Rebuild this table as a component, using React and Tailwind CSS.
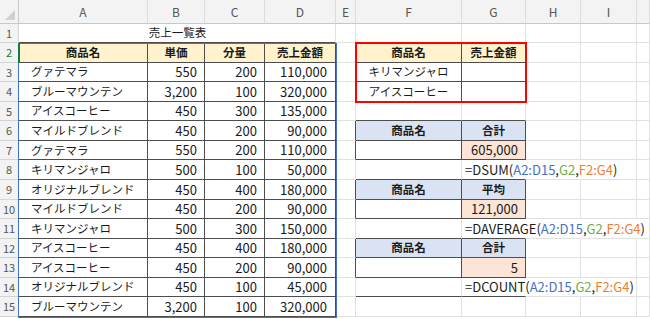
import clsx from 'clsx'

// Excel 風のシート：売上一覧表と DSUM / DAVERAGE / DCOUNT の例
const FONT = { fontFamily: '"Noto Sans CJK JP", "Noto Sans", sans-serif' }

const DATA = [
  ['グァテマラ', '550', '200', '110,000'],
  ['ブルーマウンテン', '3,200', '100', '320,000'],
  ['アイスコーヒー', '450', '300', '135,000'],
  ['マイルドブレンド', '450', '200', '90,000'],
  ['グァテマラ', '550', '200', '110,000'],
  ['キリマンジャロ', '500', '100', '50,000'],
  ['オリジナルブレンド', '450', '400', '180,000'],
  ['マイルドブレンド', '450', '200', '90,000'],
  ['キリマンジャロ', '500', '300', '150,000'],
  ['アイスコーヒー', '450', '400', '180,000'],
  ['アイスコーヒー', '450', '200', '90,000'],
  ['オリジナルブレンド', '450', '100', '45,000'],
  ['ブルーマウンテン', '3,200', '100', '320,000'],
]

const LETTERS = ['A', 'B', 'C', 'D', 'E', 'F', 'G', 'H', 'I', '']

// 罫線の色（右・下それぞれ）
const RIGHT = { g: 'border-r-[#e1e1e1]', d: 'border-r-[#4d4d4d]', n: 'border-r-transparent' }
const BOTTOM = { g: 'border-b-[#e1e1e1]', d: 'border-b-[#4d4d4d]' }

function Cell({ r = 'g', b = 'g', className, children }) {
  return (
    <div
      className={clsx(
        'flex min-w-0 items-center whitespace-nowrap border-r border-b text-[#1a1a1a]',
        RIGHT[r],
        BOTTOM[b],
        className
      )}
    >
      {children}
    </div>
  )
}

function Formula({ name }) {
  return (
    <span className="pl-[3px] text-[13px]">
      ={name}(<span className="text-[#4472c4]">A2:D15</span>,<span className="text-[#70ad47]">G2</span>,
      <span className="text-[#ed7d31]">F2:G4</span>)
    </span>
  )
}

const blank = (k) => <Cell key={k} />

// F〜G 列の小さな表の行を作る
function rightCells(r) {
  const tail = [blank('h'), blank('i'), blank('j')]
  const head = (label, bg) => [
    <Cell key="e" r="d" />,
    <Cell key="f" r="d" b="d" className={clsx(bg, 'justify-center text-[11.5px] font-bold')}>商品名</Cell>,
    <Cell key="g" r="d" b="d" className={clsx(bg, 'justify-center text-[11.5px] font-bold')}>{label}</Cell>,
    ...tail,
  ]
  const body = (gText, fText, gBg) => [
    <Cell key="e" r="d" />,
    <Cell key="f" r="d" b="d" className="justify-center text-[11.5px]">{fText}</Cell>,
    <Cell key="g" r="d" b="d" className={clsx(gBg, 'justify-end pr-[7px] text-[13px]')}>{gText}</Cell>,
    ...tail,
  ]
  const above = () => [blank('e'), <Cell key="f" b="d" />, <Cell key="g" b="d" />, ...tail]
  const formula = (name, wide) => [
    blank('e'),
    <Cell key="f" b="d" />,
    <Cell key="g" r="n" b="d" className="overflow-visible">
      <Formula name={name} />
    </Cell>,
    <Cell key="h" r="n" />,
    <Cell key="i" r={wide ? 'n' : 'g'} />,
    blank('j'),
  ]
  switch (r) {
    case 1:
      return above()
    case 2:
      return head('売上金額', 'bg-[#fff2cc]')
    case 3:
      return body('', 'キリマンジャロ', '')
    case 4:
      return body('', 'アイスコーヒー', '')
    case 5:
      return above()
    case 6:
      return head('合計', 'bg-[#dae3f3]')
    case 7:
      return body('605,000', '', 'bg-[#fce4d6]')
    case 8:
      return formula('DSUM')
    case 9:
      return head('平均', 'bg-[#dae3f3]')
    case 10:
      return body('121,000', '', 'bg-[#fce4d6]')
    case 11:
      return formula('DAVERAGE', true)
    case 12:
      return head('合計', 'bg-[#dae3f3]')
    case 13:
      return body('5', '', 'bg-[#fce4d6]')
    case 14:
      return formula('DCOUNT')
    default:
      return [blank('e'), blank('f'), blank('g'), ...tail]
  }
}

function RowHeader({ n }) {
  return (
    <div
      className={clsx(
        'flex items-center justify-center border-b border-r border-[#d4d4d4] bg-[#f3f3f3] text-[11px]',
        n === 2 ? 'text-[#107c41]' : 'text-[#555]'
      )}
    >
      {n}
    </div>
  )
}

function leftCells(r) {
  if (r === 1) {
    return [
      <Cell key="t" b="d" className="col-span-4 justify-center text-[11.5px]">
        <span className="pl-[1px]">売上一覧表</span>
      </Cell>,
    ]
  }
  if (r === 2) {
    return ['商品名', '単価', '分量', '売上金額'].map((h) => (
      <Cell key={h} r="d" b="d" className="justify-center bg-[#fff2cc] text-[11.5px] font-bold">
        {h}
      </Cell>
    ))
  }
  const [name, price, qty, total] = DATA[r - 3]
  return [
    <Cell key="a" r="d" b="d" className="pl-[12px] text-[11.5px]">{name}</Cell>,
    <Cell key="b" r="d" b="d" className="justify-end pr-[7px] text-[13px]">{price}</Cell>,
    <Cell key="c" r="d" b="d" className="justify-end pr-[7px] text-[13px]">{qty}</Cell>,
    <Cell key="d" r="d" b="d" className="justify-end pr-[8px] text-[13px]">{total}</Cell>,
  ]
}

export default function App() {
  const rows = Array.from({ length: 15 }, (_, i) => i + 1)
  return (
    <div className="h-[319px] w-[650px] overflow-hidden bg-white" style={FONT}>
      <div className="relative grid grid-cols-[19px_129px_57px_60px_71px_20px_106px_64px_55px_56px_1fr] grid-rows-[23.5px_repeat(15,19.57px)]">
        {/* 左上の角 */}
        <div className="flex items-end justify-end border-b border-r border-[#c8c8c8] bg-[#f3f3f3] p-[3px]">
          <svg width="10" height="10" viewBox="0 0 10 10">
            <path d="M10 0 L10 10 L0 10 Z" fill="#d0d0d0" />
          </svg>
        </div>
        {LETTERS.map((l, i) => (
          <div
            key={i}
            className="flex items-center justify-center border-b border-r border-b-[#c8c8c8] border-r-[#dcdcdc] bg-[#f3f3f3] pt-[1px] text-[12px] text-[#555]"
          >
            {l}
          </div>
        ))}
        {rows.map((r) => [
          <RowHeader key={`h${r}`} n={r} />,
          ...leftCells(r).map((c, i) => <c.type key={`l${r}-${i}`} {...c.props} />),
          ...rightCells(r).map((c, i) => <c.type key={`r${r}-${i}`} {...c.props} />),
        ])}

        {/* 数式で参照される範囲の枠 */}
        <div className="pointer-events-none absolute left-[18px] top-[42.5px] h-[275px] w-[319px] border-[1.5px] border-[#4472c4]" />
        <div className="pointer-events-none absolute left-[18px] top-[42.5px] h-[20px] w-[2px] bg-[#107c41]" />
        <div className="pointer-events-none absolute left-[355px] top-[42px] h-[61px] w-[172px] border-2 border-[#ff0000]" />
      </div>
    </div>
  )
}
